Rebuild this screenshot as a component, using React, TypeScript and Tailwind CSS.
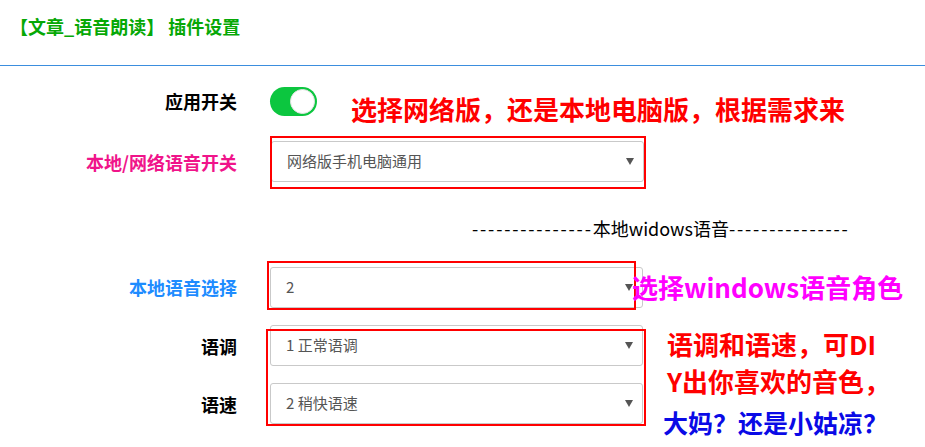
import React from "react";

const cjk = { fontFamily: '"Noto Sans CJK SC", "Noto Sans", sans-serif' };

function Select({ value, className = "" }: { value: string; className?: string }) {
  return (
    <div
      className={`flex h-[41px] w-[373px] items-center justify-between rounded-[3px] border border-[#c9c9c9] bg-white pl-[15px] pr-[9px] ${className}`}
    >
      <span className="text-[15px] text-[#555]">{value}</span>
      <span className="h-0 w-0 border-x-[4px] border-t-[7px] border-x-transparent border-t-[#555]" />
    </div>
  );
}

function Label({ children, color }: { children: React.ReactNode; color: string }) {
  return (
    <div className={`w-[237px] shrink-0 text-right text-[18px] font-bold leading-[24px] ${color}`}>
      {children}
    </div>
  );
}

export default function App() {
  return (
    <div className="h-[447px] w-[925px] overflow-hidden bg-white text-black" style={cjk}>
      {/* header */}
      <div className="h-[66px] border-b border-[#3b8ede] pl-[10px] pt-[13px]">
        <h1 className="text-[18px] font-bold leading-[26px] text-[#06a806]">【文章_语音朗读】 插件设置</h1>
      </div>

      {/* 应用开关 */}
      <div className="mt-[21px] flex items-start">
        <Label color="text-black">
          <span className="mt-[2px] block">应用开关</span>
        </Label>
        <div className="ml-[33px] flex h-[29px] w-[47px] items-center justify-end rounded-full bg-[#0cc63f] pr-[2px]">
          <div className="h-[25px] w-[25px] rounded-full border border-[#e3e3e3] bg-white" />
        </div>
        <div className="ml-[34px] mt-[6px] text-[26px] font-bold leading-[32px] text-[#ff0000]">
          选择网络版，还是本地电脑版，根据需求来
        </div>
      </div>

      {/* 本地/网络语音开关 */}
      <div className="mt-[16px] flex items-center">
        <Label color="text-[#f0148a]">本地/网络语音开关</Label>
        <div className="relative ml-[34px]">
          <Select value="网络版手机电脑通用" className="w-[372px]" />
          <div className="absolute bottom-[-7px] left-[-1px] right-[-2px] top-[-5px] border-2 border-[#ff0000]" />
        </div>
      </div>

      {/* divider */}
      <div className="mt-[33px] h-[26px] whitespace-nowrap pl-[472px] text-[18px] leading-[26px] text-black">
        <span className="tracking-[1.8px]">---------------</span>本地widows语音
        <span className="tracking-[1.8px]">---------------</span>
      </div>

      {/* 本地语音选择 */}
      <div className="mt-[26px] flex items-center">
        <Label color="text-[#1e8cff]">
          <span className="mb-[1px] block">本地语音选择</span>
        </Label>
        <div className="relative ml-[33px]">
          <Select value="2" />
          <div className="absolute bottom-[-2px] left-[-3px] right-[7px] top-[-6px] border-2 border-[#ff0000]" />
          <div className="absolute left-[362px] top-[4px] whitespace-nowrap text-[26px] font-bold leading-[32px] text-[#ff00ff]">
            选择windows语音角色
          </div>
        </div>
      </div>

      {/* 语调 / 语速 */}
      <div className="relative mt-[17px]">
        <div className="flex items-center">
          <Label color="text-black">语调</Label>
          <Select value="1 正常语调" className="ml-[33px]" />
        </div>
        <div className="mt-[17px] flex items-center">
          <Label color="text-black">语速</Label>
          <Select value="2 稍快语速" className="ml-[33px]" />
        </div>
        <div className="absolute bottom-[-2px] left-[266px] top-[4px] w-[380px] border-2 border-[#ff0000]" />
        <div className="absolute left-[667px] top-[0px] w-[240px]">
          <div className="text-[26px] font-bold leading-[37px] text-[#ff0000]">
            语调和语速，可DI
            <br />
            Y出你喜欢的音色，
          </div>
          <div className="ml-[-4px] mt-[8px] whitespace-nowrap text-[25px] font-bold leading-[30px] text-[#0a0ae6]">
            大妈？还是小姑凉？
          </div>
        </div>
      </div>
    </div>
  );
}
